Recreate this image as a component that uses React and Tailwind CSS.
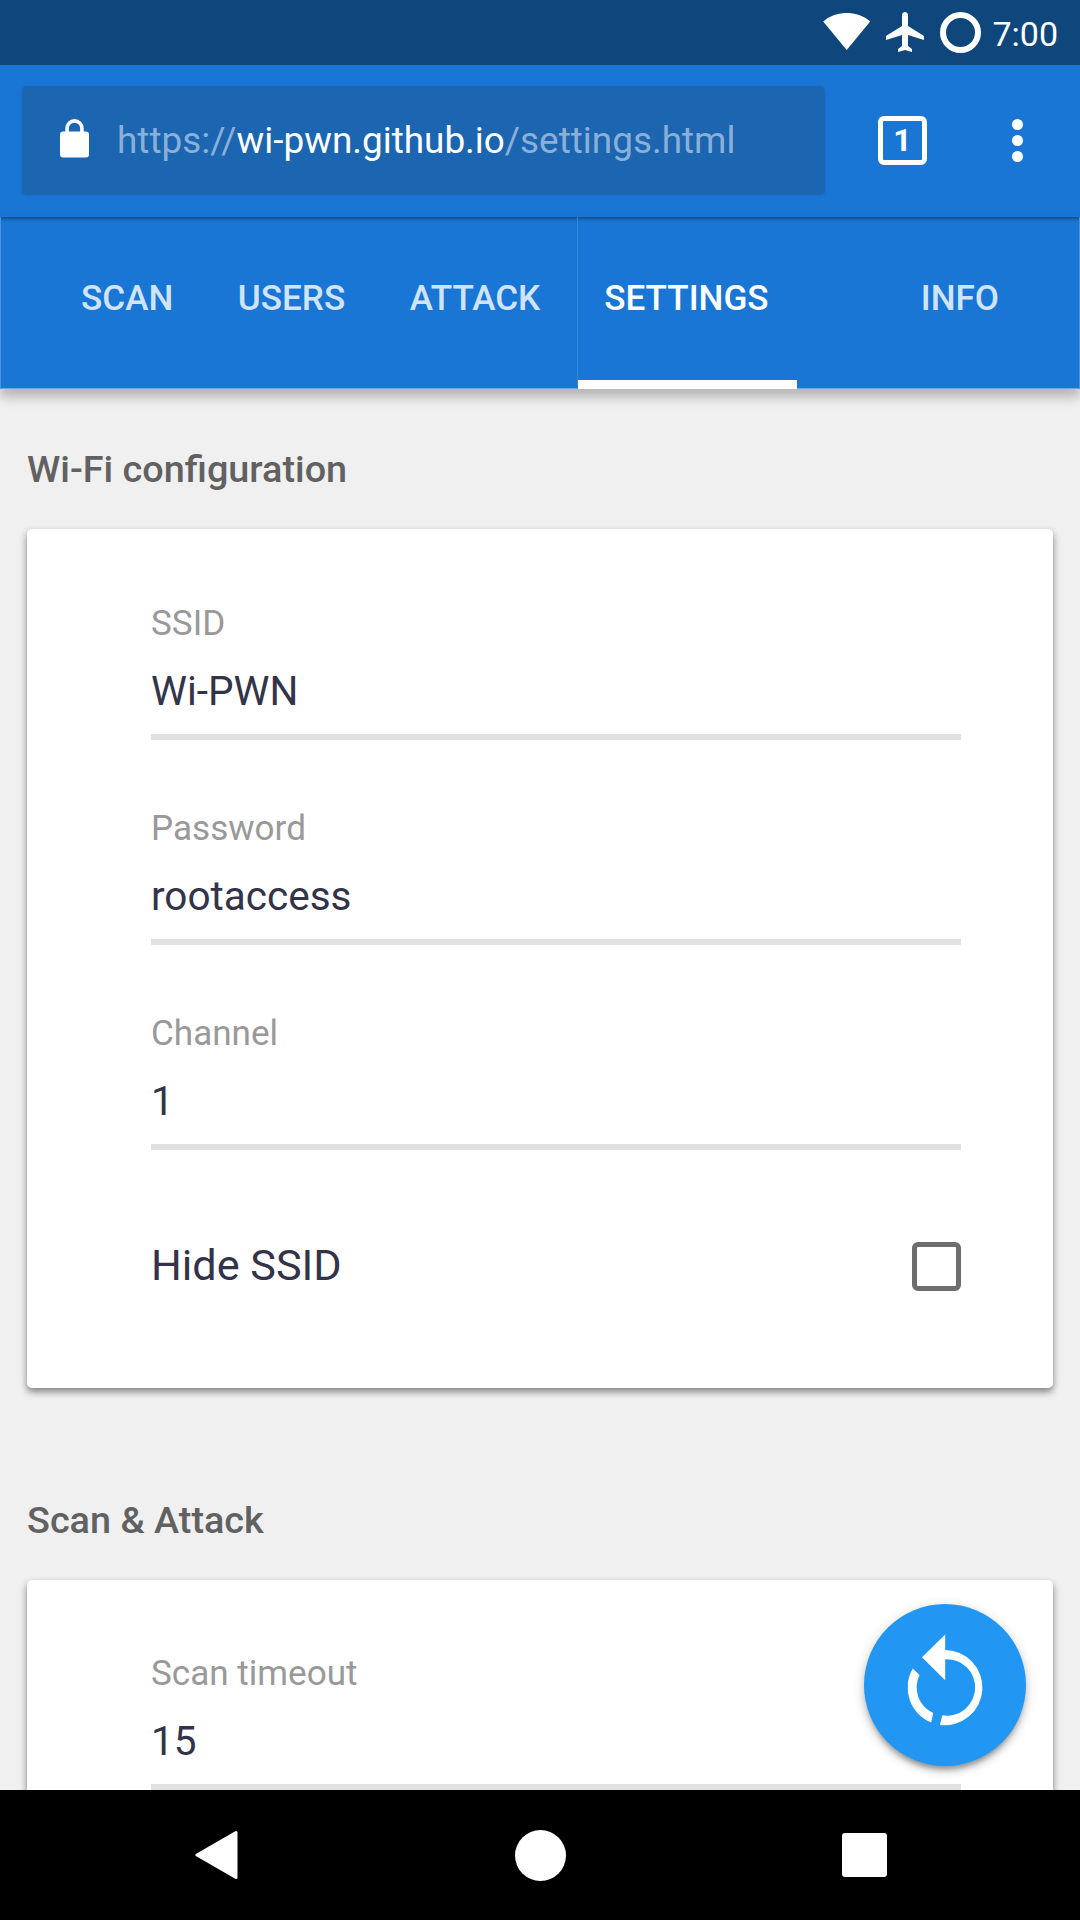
function StatusBar() {
  return (
    <div className="flex h-[65px] items-start justify-end bg-[#0f477d] pr-[22px] text-white">
      <svg className="mt-[13px] h-[37px] w-[48px]" viewBox="0 0 48 37" fill="currentColor">
        <path d="M0.2 8.4A36.8 36.8 0 0 1 47.2 8.4L23.7 37Z" />
      </svg>
      <svg className="mt-3 ml-[15px] h-10 w-[38px]" viewBox="2 2 19 20" fill="currentColor">
        <path d="M21 16v-2l-8-5V3.5c0-.83-.67-1.5-1.5-1.5S10 2.67 10 3.5V9l-8 5v2l8-2.5V19l-2 1.5V22l3.5-1 3.5 1v-1.5L13 19v-5.5l8 2.5z" />
      </svg>
      <div className="mt-3 ml-4 size-[41px] rounded-full border-[6px] border-white" />
      <span className="mt-[14px] ml-[11px] text-[34px] leading-10">7:00</span>
    </div>
  );
}

function BrowserBar() {
  return (
    <div className="flex h-[152px] items-center bg-[#1976d5] pb-px pl-[22px] text-white">
      <div className="flex h-[109px] w-[803px] items-center rounded-[5px] bg-[#1c65b0] pl-[38px] shadow-[0_1px_5px_rgba(0,0,0,0.06)]">
        <svg className="mb-[5px] h-[39px] w-[29px]" viewBox="0 0 29 39">
          <rect y="12.6" width="29" height="26" rx="3" fill="white" />
          <path d="M7.1 13.5V9.3a7.4 7.4 0 0 1 14.8 0V13.5" fill="none" stroke="white" strokeWidth="3.6" />
        </svg>
        <p className="ml-7 text-[36.9px] leading-[43px] whitespace-nowrap text-[#8bb0d8]">
          https://<span className="text-white">wi-pwn.github.io</span>/settings.html
        </p>
      </div>
      <div className="ml-[53px] flex size-[49px] items-center justify-center rounded-[6px] border-[5px] border-white pb-px text-[32px] leading-[38px] font-bold">
        1
      </div>
      <div className="ml-[85px] flex w-[11px] flex-col gap-[5px]">
        <i className="size-[11px] rounded-full bg-white" />
        <i className="size-[11px] rounded-full bg-white" />
        <i className="size-[11px] rounded-full bg-white" />
      </div>
    </div>
  );
}

function Tabs() {
  return (
    <nav className="relative z-10 flex h-[172px] border-x border-b border-x-[#4b92dd] border-b-[#6ba5e3] bg-[#1976d5] pl-20 text-[35.1px] leading-[42px] font-medium text-[#d1e4f7] shadow-[0_8px_11px_rgba(0,0,0,0.25),inset_0_6px_4px_-5px_rgba(0,0,0,0.5)]">
      <a className="mt-[60px]">SCAN</a>
      <a className="mt-[60px] ml-[64.5px]">USERS</a>
      <a className="mt-[60px] ml-[64.5px]">ATTACK</a>
      <a className="ml-[37px] -mb-px flex w-[219.5px] flex-col justify-between border-l border-[#3484da] text-white">
        <span className="mt-[60px] ml-[26px]">SETTINGS</span>
        <span className="h-[9px] bg-white" />
      </a>
      <a className="mt-[60px] ml-[124px]">INFO</a>
    </nav>
  );
}

function Field({ label, value }) {
  return (
    <div className="h-[205px]">
      <p className="text-[35.1px] leading-10 text-[#999]">{label}</p>
      <p className="mt-6 text-[40.5px] leading-[48px] text-[#333349]">{value}</p>
      <div className="mt-[19px] h-1.5 bg-[#e1e1e1]" />
    </div>
  );
}

function Section({ title, className, children }) {
  return (
    <section className={className}>
      <h2 className="text-[37.8px] leading-[44px] font-medium text-[#616161]">{title}</h2>
      <div className="mt-[38px] h-[859px] rounded-[5px] bg-white pt-[74px] pr-[92px] pl-[124px] shadow-[0_3px_8px_rgba(0,0,0,0.16),0_4px_6px_rgba(0,0,0,0.34)]">
        {children}
      </div>
    </section>
  );
}

function Fab() {
  return (
    <button className="absolute right-[54px] bottom-6 size-[162px] rounded-full bg-[#2296f3] shadow-[0_5px_6px_rgba(0,0,0,0.16),0_3px_13px_rgba(0,0,0,0.16),0_6px_4px_-3px_rgba(0,0,0,0.22)]">
      <svg className="size-[162px]" viewBox="0 0.7 162 162" fill="white">
        <path d="M81.2 31.3V77L58 54Z" />
        <path d="M80.5 46.6A37.7 37.7 0 1 1 76 121.7L78.3 112A28.2 28.2 0 1 0 80.5 56.1Z" />
        <path d="M67.2 119.3A37.7 37.7 0 0 1 48.8 65.3L55.5 71.7A28.2 28.2 0 0 0 69.2 109.8Z" />
      </svg>
    </button>
  );
}

function NavBar() {
  return (
    <div className="flex h-[130px] items-center bg-black pl-[195px]">
      <svg className="h-[50px] w-[43px]" viewBox="0 0 43 50">
        <path d="M2 25L41 2.5V47.5Z" fill="white" stroke="white" strokeWidth="3" strokeLinejoin="round" />
      </svg>
      <div className="ml-[277px] size-[51px] rounded-full bg-white" />
      <div className="ml-[276px] h-11 w-[45px] rounded-[3px] bg-white" />
    </div>
  );
}

export default function App() {
  return (
    <div className="flex h-[1920px] w-[1080px] flex-col overflow-hidden bg-[#f0f0f0] font-['Roboto',sans-serif]">
      <StatusBar />
      <BrowserBar />
      <Tabs />
      <main className="relative h-[1401px] overflow-hidden px-[27px] pt-[58px]">
        <Section title="Wi-Fi configuration">
          <Field label="SSID" value="Wi-PWN" />
          <Field label="Password" value="rootaccess" />
          <Field label="Channel" value="1" />
          <div className="mt-[22px] flex items-center justify-between text-[43.2px] leading-[51px] text-[#333349]">
            Hide SSID
            <span className="mt-px size-[49px] rounded-[6px] border-[5px] border-[#6d6d6d]" />
          </div>
        </Section>
        <Section title="Scan & Attack" className="mt-[110px]">
          <div className="-mt-px">
            <Field label="Scan timeout" value="15" />
          </div>
        </Section>
        <Fab />
      </main>
      <NavBar />
    </div>
  );
}
